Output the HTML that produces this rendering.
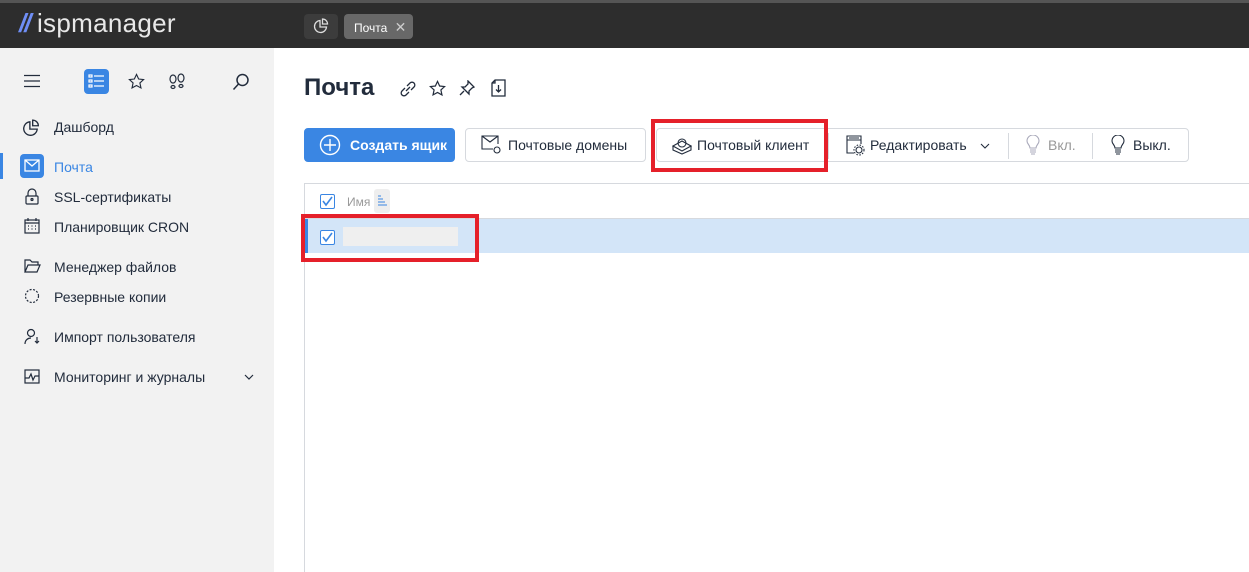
<!DOCTYPE html>
<html><head><meta charset="utf-8"><style>
*{box-sizing:border-box;margin:0;padding:0}
body{width:1249px;height:572px;overflow:hidden;font-family:"Liberation Sans","DejaVu Sans",sans-serif;background:#fff;position:relative;color:#222c3c}
.abs{position:absolute}
.top{left:0;top:0;width:1249px;height:48px;background:#2d2d2d;border-top:3px solid #555}
.side{left:0;top:48px;width:274px;height:524px;background:#f2f2f2}
.nav{position:absolute;left:54px;font-size:14px;color:#222c3c}
.ic{position:absolute;left:22px}
.btn{position:absolute;top:128px;height:34px;border:1px solid #d6d9de;border-radius:4px;font-size:14px;display:flex;align-items:center}
</style></head><body>
<div class="abs top"></div>
<div class="abs" style="left:19px;top:8px;font-size:26px;color:#e8e8e8;letter-spacing:0.3px"><span style="color:#6f8ef5;font-style:italic;font-weight:bold;letter-spacing:-2px">//</span> ispmanager</div>
<div class="abs" style="left:304px;top:14px;width:34px;height:25px;background:#3c3c3c;border-radius:4px"></div>
<svg class="abs" style="left:313px;top:18px" width="16" height="16" viewBox="0 0 16 16" fill="none" stroke="#ddd" stroke-width="1.3"><path d="M7 2.5A6 6 0 1 0 13.5 9H7z"/><path d="M9.5 1v5h5A5 5 0 0 0 9.5 1z"/></svg>
<div class="abs" style="left:344px;top:14px;width:69px;height:25px;background:#686868;border-radius:4px;color:#fff;font-size:12px;padding:5px 0 0 10px">Почта <span style="color:#ccc;font-weight:normal;font-size:14px;margin-left:4px">✕</span></div>
<div class="abs side"></div>
<svg class="abs" style="left:24px;top:74px" width="16" height="14" stroke="#222c3c" stroke-width="1.3"><path d="M0 1.5h16M0 7h16M0 12.5h16"/></svg>
<div class="abs" style="left:84px;top:69px;width:25px;height:25px;background:#3a86e3;border-radius:4px"></div>
<svg class="abs" style="left:88px;top:73px" width="17" height="17" stroke="#fff" stroke-width="1.2" fill="none"><rect x="1" y="2" width="3" height="2"/><rect x="1" y="7" width="3" height="2"/><rect x="1" y="12" width="3" height="2"/><path d="M6 3h10M6 8h10M6 13h10"/></svg>
<svg class="abs" style="left:128px;top:73px" width="17" height="17" viewBox="0 0 24 24" fill="none" stroke="#222c3c" stroke-width="1.6"><path d="M12 2l3 6.5 7 .8-5.2 4.8 1.5 7L12 17.6 5.7 21l1.5-7L2 9.3l7-.8z"/></svg>
<svg class="abs" style="left:168px;top:73px" width="18" height="17" fill="none" stroke="#222c3c" stroke-width="1.2"><ellipse cx="5" cy="6" rx="3" ry="4"/><ellipse cx="13" cy="5" rx="3" ry="4"/><ellipse cx="5" cy="14" rx="2" ry="1.5"/><ellipse cx="13" cy="13" rx="2" ry="1.5"/></svg>
<svg class="abs" style="left:232px;top:73px" width="18" height="18" fill="none" stroke="#222c3c" stroke-width="1.5"><circle cx="10.5" cy="7" r="5.5"/><path d="M6.5 11L1.5 16.5"/></svg>

<svg class="ic" style="top:119px" width="18" height="18" viewBox="0 0 16 16" fill="none" stroke="#222c3c" stroke-width="1.2"><path d="M7 2.5A6 6 0 1 0 13.5 9H7z"/><path d="M9.5 1v5h5A5 5 0 0 0 9.5 1z"/></svg>
<div class="nav" style="top:119px">Дашборд</div>
<div class="abs" style="left:0;top:153px;width:3px;height:26px;background:#3a86e3"></div>
<div class="abs" style="left:20px;top:154px;width:24px;height:24px;background:#3a86e3;border-radius:4px"></div>
<svg class="abs" style="left:24px;top:159px" width="16" height="13" fill="none" stroke="#fff" stroke-width="1.3"><rect x="1" y="1" width="14" height="11"/><path d="M1 1l7 6 7-6"/></svg>
<div class="nav" style="top:159px;color:#3a86e3">Почта</div>
<svg class="ic" style="top:188px;left:25px" width="14" height="17" fill="none" stroke="#222c3c" stroke-width="1.2"><path d="M3 8V5a4 4 0 0 1 8 0v3"/><rect x="1" y="8" width="12" height="8" rx="1"/><circle cx="7" cy="11.5" r="1"/></svg>
<div class="nav" style="top:189px">SSL-сертификаты</div>
<svg class="ic" style="top:218px;left:24px" width="16" height="16" fill="none" stroke="#222c3c" stroke-width="1.2"><rect x="1" y="2" width="14" height="13"/><path d="M1 5h14M4 0v3M12 0v3M4 8h1M7.5 8h1M11 8h1M4 11h1M7.5 11h1M11 11h1"/></svg>
<div class="nav" style="top:219px">Планировщик CRON</div>
<svg class="ic" style="top:259px;left:24px" width="17" height="14" fill="none" stroke="#222c3c" stroke-width="1.2"><path d="M1 13V1h5l2 2h6v3M1 13l3-7h12l-3 7z"/></svg>
<div class="nav" style="top:259px">Менеджер файлов</div>
<svg class="ic" style="top:288px;left:24px" width="16" height="16" fill="none" stroke="#222c3c" stroke-width="1.2" stroke-dasharray="2 1.5"><circle cx="8" cy="8" r="6.5"/></svg>
<div class="nav" style="top:289px">Резервные копии</div>
<svg class="ic" style="top:328px;left:24px" width="17" height="17" fill="none" stroke="#222c3c" stroke-width="1.2"><circle cx="7" cy="5" r="3.5"/><path d="M1 16c0-4 3-6 6-6M13 9v6M11 13l2 2 2-2"/></svg>
<div class="nav" style="top:329px">Импорт пользователя</div>
<svg class="ic" style="top:369px;left:24px" width="16" height="15" fill="none" stroke="#222c3c" stroke-width="1.2"><rect x="1" y="1" width="14" height="13"/><path d="M1 9h4l2-4 2 6 2-4h4"/></svg>
<div class="nav" style="top:369px">Мониторинг и журналы</div>
<svg class="abs" style="left:244px;top:374px" width="10" height="6" fill="none" stroke="#222c3c" stroke-width="1.2"><path d="M1 1l4 4 4-4"/></svg>

<div class="abs" style="left:304px;top:74px;font-size:24px;font-weight:bold;color:#222c3c">Почта</div>
<svg class="abs" style="left:400px;top:81px" width="16" height="16" fill="none" stroke="#222c3c" stroke-width="1.3"><path d="M7 5l3-3a2.5 2.5 0 0 1 4 4l-3 3M9 11l-3 3a2.5 2.5 0 0 1-4-4l3-3M6 10l4-4"/></svg>
<svg class="abs" style="left:429px;top:80px" width="17" height="17" viewBox="0 0 24 24" fill="none" stroke="#222c3c" stroke-width="1.7"><path d="M12 2l3 6.5 7 .8-5.2 4.8 1.5 7L12 17.6 5.7 21l1.5-7L2 9.3l7-.8z"/></svg>
<svg class="abs" style="left:459px;top:80px" width="16" height="16" fill="none" stroke="#222c3c" stroke-width="1.3"><path d="M9 1l6 6-2 1-3 3 0 3-7-7 3 0 3-3zM5 11l-4 4"/></svg>
<svg class="abs" style="left:491px;top:79px" width="15" height="18" fill="none" stroke="#222c3c" stroke-width="1.3"><path d="M4 1h10v16H1V4zM4 1v3H1M7.5 6v7M5 10.5l2.5 2.5 2.5-2.5"/></svg>

<div class="btn" style="left:304px;width:151px;background:#3a86e3;border-color:#3a86e3;color:#fff;font-weight:bold">
<svg style="margin:0 9px 0 14px" width="22" height="22" fill="none" stroke="#fff" stroke-width="1.4"><circle cx="11" cy="11" r="9.5"/><path d="M11 5v12M5 11h12"/></svg>Создать ящик</div>
<div class="btn" style="left:465px;width:181px">
<svg style="margin:0 5px 0 15px" width="22" height="20" fill="none" stroke="#222c3c" stroke-width="1.1"><path d="M12 14H1V1h16v8M1 1l8 6 8-6"/><circle cx="16" cy="15" r="3"/></svg>Почтовые домены</div>
<div class="abs" style="left:656px;top:128px;width:533px;height:34px;border:1px solid #d6d9de;border-radius:4px"></div>
<div class="abs" style="left:672px;top:137px"><svg width="20" height="18" fill="none" stroke="#222c3c" stroke-width="1.1"><path d="M1 9l9-5 9 5-9 5zM1 9v4l9 4 9-4V9"/><circle cx="10" cy="6" r="4"/></svg></div>
<div class="abs" style="left:697px;top:137px;font-size:14px">Почтовый клиент</div>
<div class="abs" style="left:828px;top:133px;width:1px;height:26px;background:#d6d9de"></div>
<svg class="abs" style="left:846px;top:135px" width="20" height="22" fill="none" stroke="#222c3c" stroke-width="1.1"><path d="M8 18H1V1h14v8M1 5h14M3 3h10"/><circle cx="13" cy="15" r="3"/><circle cx="13" cy="15" r="5" stroke-dasharray="1.5 1.5"/></svg>
<div class="abs" style="left:870px;top:137px;font-size:14px">Редактировать</div>
<svg class="abs" style="left:980px;top:143px" width="10" height="6" fill="none" stroke="#222c3c" stroke-width="1.1"><path d="M1 1l4 4 4-4"/></svg>
<div class="abs" style="left:1008px;top:133px;width:1px;height:26px;background:#d6d9de"></div>
<svg class="abs" style="left:1026px;top:135px" width="14" height="22" fill="none" stroke="#aab" stroke-width="1.1"><path d="M4 13c0-3-3-4-3-7a6 6 0 0 1 12 0c0 3-3 4-3 7zM4 15h6M4 17h6M5 19h4"/></svg>
<div class="abs" style="left:1048px;top:137px;font-size:14px;color:#999">Вкл.</div>
<div class="abs" style="left:1092px;top:133px;width:1px;height:26px;background:#d6d9de"></div>
<svg class="abs" style="left:1111px;top:135px" width="14" height="22" fill="none" stroke="#222c3c" stroke-width="1.1"><path d="M4 13c0-3-3-4-3-7a6 6 0 0 1 12 0c0 3-3 4-3 7zM4 15h6M4 17h6M5 19h4"/></svg>
<div class="abs" style="left:1133px;top:137px;font-size:14px">Выкл.</div>

<div class="abs" style="left:304px;top:183px;width:945px;height:389px;border-left:1px solid #d6d9de;border-top:1px solid #d6d9de"></div>
<div class="abs" style="left:305px;top:218px;width:944px;height:1px;background:#d6d9de"></div>
<div class="abs" style="left:320px;top:194px;width:15px;height:15px;border:1.5px solid #3a86e3;border-radius:2px"></div>
<svg class="abs" style="left:321px;top:195px" width="13" height="13" fill="none" stroke="#3a86e3" stroke-width="1.6"><path d="M2 6l3 4 6-8"/></svg>
<div class="abs" style="left:347px;top:195px;font-size:12px;color:#999">Имя</div>
<div class="abs" style="left:374px;top:189px;width:16px;height:24px;background:#eee;border-radius:3px"></div>
<svg class="abs" style="left:377px;top:195px" width="10" height="11" stroke="#3a86e3" stroke-width="1.1"><path d="M1 1h3M1 4h5M1 7h7M1 10h9"/></svg>
<div class="abs" style="left:305px;top:219px;width:944px;height:34px;background:#d3e5f8"></div>
<div class="abs" style="left:305px;top:219px;width:3px;height:34px;background:#3a86e3"></div>
<div class="abs" style="left:320px;top:230px;width:15px;height:15px;border:1.5px solid #3a86e3;border-radius:2px;background:#fff"></div>
<svg class="abs" style="left:321px;top:231px" width="13" height="13" fill="none" stroke="#3a86e3" stroke-width="1.6"><path d="M2 6l3 4 6-8"/></svg>
<div class="abs" style="left:343px;top:227px;width:115px;height:19px;background:#efefef"></div>

<div class="abs" style="left:651px;top:119px;width:177px;height:53px;border:4px solid #e5202a"></div>
<div class="abs" style="left:301px;top:214px;width:178px;height:48px;border:4px solid #e5202a"></div>
</body></html>
